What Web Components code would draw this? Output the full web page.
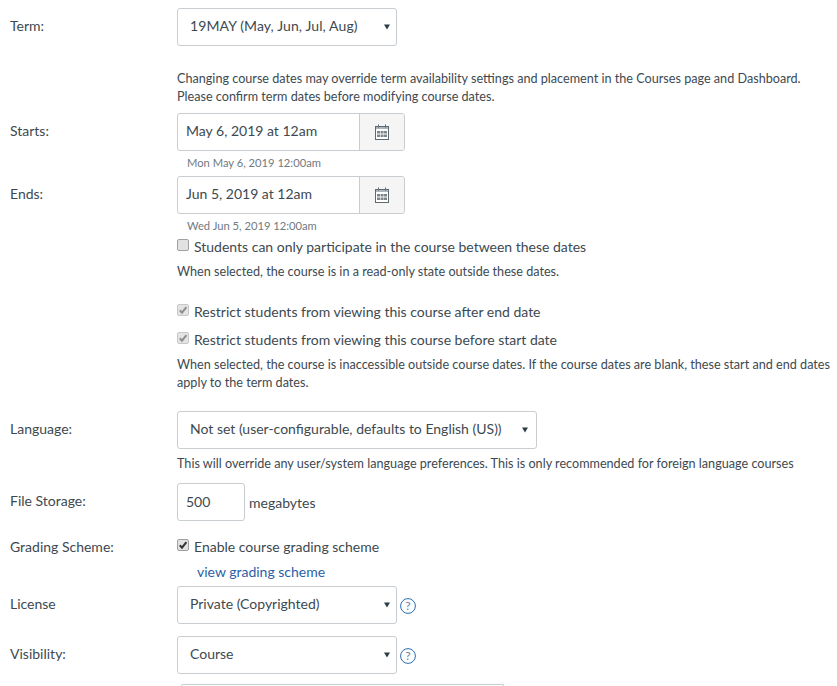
<!DOCTYPE html>
<html>
<head>
<meta charset="utf-8">
<title>Course settings</title>
<style>
    html, body { margin: 0; height: 686px; overflow: hidden; background: #fff; }
    body { font-family: Lato, "Open Sans", sans-serif; font-size: 14px; color: #3d4950; }
    #form { display: block; padding: 8px 0 0 10px; }
</style>
</head>
<body>
<div id="form">
    <form-row label="Term:"><fake-select style="width:220px;--ls:0.11px">19MAY (May, Jun, Jul, Aug)</fake-select></form-row>
    <help-text style="margin-top:24px">Changing course dates may override term availability settings and placement in the Courses page and Dashboard.<br>Please confirm term dates before modifying course dates.</help-text>
    <form-row label="Starts:" style="margin-top:7px"><date-field hint="Mon May 6, 2019 12:00am">May 6, 2019 at 12am</date-field></form-row>
    <form-row label="Ends:" style="margin-top:6px"><date-field hint="Wed Jun 5, 2019 12:00am">Jun 5, 2019 at 12am</date-field></form-row>
    <check-row style="margin-top:3px">Students can only participate in the course between these dates</check-row>
    <help-text style="margin-top:7px">When selected, the course is in a read-only state outside these dates.</help-text>
    <check-row style="margin-top:20px" checked disabled>Restrict students from viewing this course after end date</check-row>
    <check-row style="margin-top:8px" checked disabled>Restrict students from viewing this course before start date</check-row>
    <help-text style="margin-top:7px">When selected, the course is inaccessible outside course dates. If the course dates are blank, these start and end dates<br>apply to the term dates.</help-text>
    <form-row label="Language:" style="margin-top:19px"><fake-select style="width:360px;padding-right:8px">Not set (user-configurable, defaults to English (US))</fake-select></form-row>
    <help-text style="margin-top:6px">This will override any user/system language preferences. This is only recommended for foreign language courses</help-text>
    <form-row label="File Storage:" style="margin-top:10px"><size-field value="500">megabytes</size-field></form-row>
    <form-row label="Grading Scheme:" style="margin-top:15px"><check-row inline checked>Enable course grading scheme</check-row></form-row>
    <link-line style="margin-top:5px">view grading scheme</link-line>
    <form-row label="License" style="margin-top:4px"><fake-select style="width:220px">Private (Copyrighted)</fake-select><help-icon></help-icon></form-row>
    <form-row label="Visibility:" style="margin-top:12px"><fake-select style="width:220px">Course</fake-select><help-icon></help-icon></form-row>
    <next-box style="margin-top:10px"></next-box>
</div>
<script>
    // 라벨 + 내용 한 줄
    class FormRow extends HTMLElement {
        constructor() {
            super();
            let shadowRoot = this.attachShadow({mode: 'open'});
            shadowRoot.innerHTML = `
                <style>
                    :host { display: flex; align-items: flex-start; }
                    .label { width: 167px; flex: none; line-height: 36px; }
                    :host([label="Grading Scheme:"]) .label { line-height: 20px; padding-top: 1px; }
                    .field { display: flex; align-items: center; }
                </style>
                <div class="label">${this.getAttribute('label')}</div>
                <div class="field"><slot></slot></div>
            `;
        }
    }

    class FakeSelect extends HTMLElement {
        constructor() {
            super();
            let shadowRoot = this.attachShadow({mode: 'open'});
            shadowRoot.innerHTML = `
                <style>
                    :host {
                        display: flex;
                        align-items: center;
                        justify-content: space-between;
                        box-sizing: border-box;
                        height: 38px;
                        padding: 0 6px 0 12px;
                        background: #fff;
                        border: 1px solid #c7cdd1;
                        border-radius: 3px;
                    }
                    span { padding-bottom: 4px; letter-spacing: var(--ls, 0); }
                    svg { display: block; flex: none; }
                </style>
                <span><slot></slot></span>
                <svg width="6" height="6" viewBox="0 0 6 6"><path d="M0 0.5H6L3 5.5Z" fill="#2d3b45"/></svg>
            `;
        }
    }

    class DateField extends HTMLElement {
        constructor() {
            super();
            let shadowRoot = this.attachShadow({mode: 'open'});
            shadowRoot.innerHTML = `
                <style>
                    :host { display: block; }
                    .wrap { display: flex; width: 228px; height: 38px; box-sizing: border-box; border: 1px solid #c7cdd1; border-radius: 3px; }
                    .input { width: 173px; padding-left: 8px; flex: none; line-height: 34px; }
                    .btn { flex: 1; display: flex; align-items: center; justify-content: center; background: #f5f5f5; border-left: 1px solid #c7cdd1; border-radius: 0 3px 3px 0; }
                    .hint { margin: 5px 0 0 10px; font-size: 11.2px; line-height: 14px; color: #6f7a82; }
                    svg { display: block; }
                </style>
                <div class="wrap">
                    <div class="input"><slot></slot></div>
                    <div class="btn">
                        <svg width="14" height="16" viewBox="0 0 14 16">
                            <rect x="0.5" y="2.5" width="13" height="13" fill="#fff" stroke="#5f6a70"/>
                            <rect x="1" y="3" width="12" height="2" fill="#aeb4b8"/>
                            <path d="M3.5 0.5V3.5M10.5 0.5V3.5" stroke="#5f6a70"/>
                            <path d="M2 7h3v2.5H2zM5.6 7h3v2.5H5.6zM9 7h3v2.5H9zM2 10.5h3V13H2zM5.6 10.5h3V13H5.6zM9 10.5h3V13H9z" fill="#7b858a"/>
                        </svg>
                    </div>
                </div>
                <div class="hint">${this.getAttribute('hint')}</div>
            `;
        }
    }

    class CheckRow extends HTMLElement {
        constructor() {
            super();
            let shadowRoot = this.attachShadow({mode: 'open'});
            const checked = this.hasAttribute('checked');
            const off = this.hasAttribute('disabled');
            shadowRoot.innerHTML = `
                <style>
                    :host { display: flex; align-items: center; height: 20px; padding-left: 167px; }
                    :host([inline]) { padding-left: 0; }
                    .box {
                        width: 12px; height: 12px; margin: 0 5px 2px 0; flex: none;
                        display: flex; align-items: center; justify-content: center;
                        box-sizing: border-box;
                        border: 1px solid ${off ? '#c9c9c9' : '#a0a0a0'};
                        border-radius: 2px;
                        background: ${off ? '#e4e4e4' : '#e2e2e2'};
                    }
                    svg { display: block; }
                </style>
                <span class="box">${checked ? `<svg width="10" height="10" viewBox="0 0 10 10"><path d="M1.8 5.2L4 7.6L8.4 2.2" fill="none" stroke="${off ? '#8f8f8f' : '#333'}" stroke-width="2"/></svg>` : ''}</span>
                <span><slot></slot></span>
            `;
        }
    }

    class HelpText extends HTMLElement {
        constructor() {
            super();
            let shadowRoot = this.attachShadow({mode: 'open'});
            shadowRoot.innerHTML = `
                <style>
                    :host { display: block; padding-left: 167px; font-size: 12.64px; line-height: 18px; white-space: nowrap; }
                </style>
                <slot></slot>
            `;
        }
    }

    class SizeField extends HTMLElement {
        constructor() {
            super();
            let shadowRoot = this.attachShadow({mode: 'open'});
            shadowRoot.innerHTML = `
                <style>
                    :host { display: flex; align-items: center; }
                    .input { width: 68px; height: 38px; box-sizing: border-box; padding-left: 8px; line-height: 35px; border: 1px solid #c7cdd1; border-radius: 3px; margin-right: 4px; }
                </style>
                <div class="input">${this.getAttribute('value')}</div>
                <slot></slot>
            `;
        }
    }

    class LinkLine extends HTMLElement {
        constructor() {
            super();
            let shadowRoot = this.attachShadow({mode: 'open'});
            shadowRoot.innerHTML = `
                <style>
                    :host { display: block; padding-left: 187px; line-height: 20px; color: #2b5fa8; }
                </style>
                <slot></slot>
            `;
        }
    }

    class HelpIcon extends HTMLElement {
        constructor() {
            super();
            let shadowRoot = this.attachShadow({mode: 'open'});
            shadowRoot.innerHTML = `
                <style>
                    :host { display: block; width: 16px; height: 16px; margin-left: 3px; position: relative; top: 1px; }
                    svg { display: block; }
                    text { font-family: Lato, sans-serif; font-size: 12px; fill: #5f7f9f; }
                </style>
                <svg width="16" height="16" viewBox="0 0 16 16">
                    <circle cx="8" cy="8" r="7.4" fill="none" stroke="#2b6fb0" stroke-width="1"/>
                    <text x="8" y="12.4" text-anchor="middle">?</text>
                </svg>
            `;
        }
    }

    // 아래쪽에서 잘린 입력칸 (윗부분만 보임)
    class NextBox extends HTMLElement {
        constructor() {
            super();
            let shadowRoot = this.attachShadow({mode: 'open'});
            shadowRoot.innerHTML = `
                <style>
                    :host { display: block; padding-left: 171px; }
                    div { width: 323px; height: 2px; box-sizing: border-box; border: 1px solid #c7cdd1; border-bottom: none; border-radius: 5px 5px 0 0; }
                </style>
                <div></div>
            `;
        }
    }

    customElements.define('form-row', FormRow);
    customElements.define('fake-select', FakeSelect);
    customElements.define('date-field', DateField);
    customElements.define('check-row', CheckRow);
    customElements.define('help-text', HelpText);
    customElements.define('size-field', SizeField);
    customElements.define('link-line', LinkLine);
    customElements.define('help-icon', HelpIcon);
    customElements.define('next-box', NextBox);
</script>
</body>
</html>
